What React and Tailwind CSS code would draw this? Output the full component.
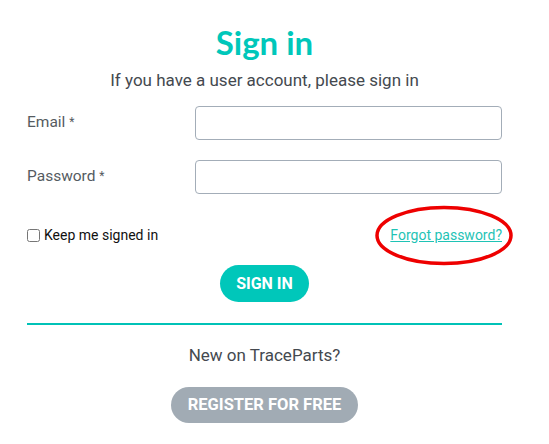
import React, { useState } from 'react';

const TEAL = 'bg-[#00c7ba]';

const Field = ({ label, type, className }) => (
  <div className={`flex items-center ${className}`}>
    <label className="w-[168px] text-[15.5px] text-[#555b61]">
      {label} <span className="text-[12px] align-[1px]">*</span>
    </label>
    <input type={type} className="flex-1 h-[34px] rounded-[4px] border border-[#a3adb8] bg-white px-2 outline-none" />
  </div>
);

const App = () => {
  const [keep, setKeep] = useState(false);

  return (
    <div className="w-[549px] h-[444px] bg-white" style={{ fontFamily: 'Roboto, "Liberation Sans", sans-serif' }}>
      <div className="ml-[27px] w-[475px] flex flex-col pt-[23px]">
        <h1 className="text-center text-[33px] leading-[38px] font-bold text-[#00c7ba]" style={{ fontFamily: 'Lato, Roboto, sans-serif' }}>
          Sign in
        </h1>
        <p className="mt-[7px] text-center text-[17px] leading-[24px] text-[#44494f]">
          If you have a user account, please sign in
        </p>

        <Field label="Email" type="email" className="mt-[14px]" />
        <Field label="Password" type="password" className="mt-[20px]" />

        {/* Keep signed / forgot */}
        <div className="mt-[31px] h-[20px] flex items-center justify-between">
          <label className="flex items-center gap-[4px] text-[14px] text-[#111]">
            <input type="checkbox" checked={keep} onChange={(e) => setKeep(e.target.checked)}
              className="w-[13px] h-[13px] m-0" />
            Keep me signed in
          </label>
          <div className="relative h-[20px] flex items-center">
            <a href="#" className="text-[14px] text-[#1fc3b5] underline">Forgot password?</a>
            <svg className="absolute left-[-16px] top-[-20px] pointer-events-none" width="141" height="62" viewBox="0 0 141 62">
              <ellipse cx="70" cy="30.5" rx="67" ry="28" fill="none" stroke="#ee0000" strokeWidth="3.5" />
            </svg>
          </div>
        </div>

        <div className="mt-[20px] flex justify-center">
          <button className={`w-[89px] h-[37px] rounded-full ${TEAL} text-white text-[16px] font-bold uppercase`}>
            Sign in
          </button>
        </div>

        <div className="mt-[21px] h-[2px] bg-[#00c2b7]" />

        <p className="mt-[18px] text-center text-[17px] leading-[24px] text-[#44494f]">
          New on TraceParts?
        </p>

        <div className="mt-[20px] flex justify-center">
          <button className="w-[187px] h-[36px] rounded-full bg-[#a1abb4] text-white text-[16.5px] font-bold uppercase">
            Register for free
          </button>
        </div>
      </div>
    </div>
  );
};

export default App;
